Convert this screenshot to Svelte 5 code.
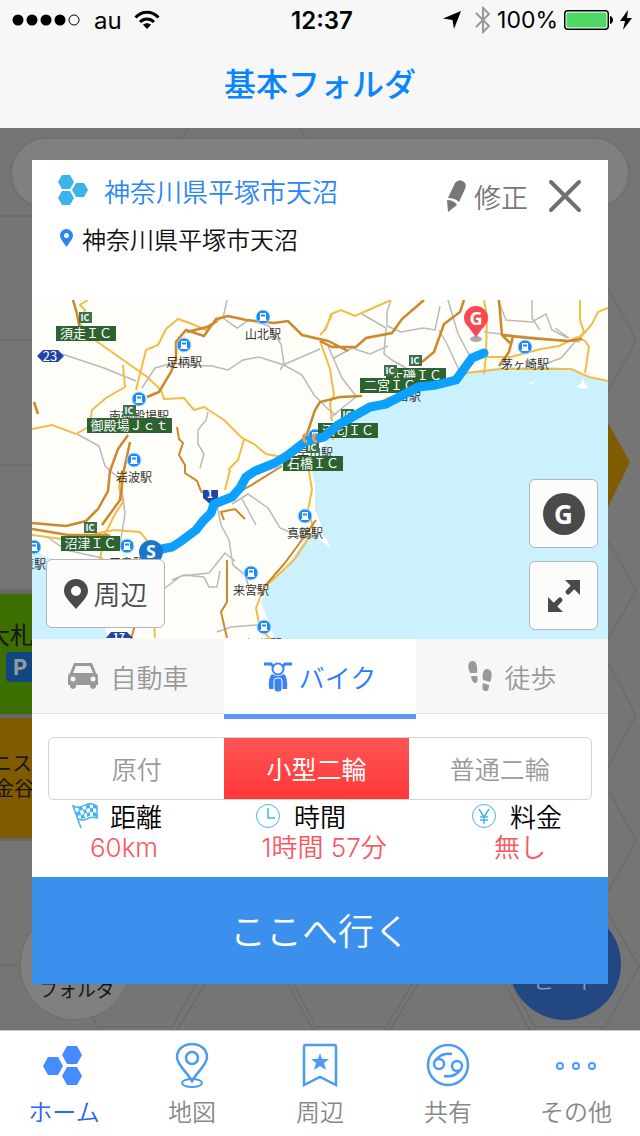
<script lang="ts">
  interface Station {
    name: string;
    x: number;
    y: number;
  }

  interface Interchange {
    name: string;
    x: number; // left edge of the plate
    y: number;
    width: number;
    icX: number;
    icY: number;
  }

  const place = "神奈川県平塚市天沼";

  const stations: Station[] = [
    { name: "山北駅", x: 231, y: 17 },
    { name: "足柄駅", x: 152, y: 45 },
    { name: "南御殿場駅", x: 107, y: 99 },
    { name: "岩波駅", x: 102, y: 160 },
    { name: "茅ヶ崎駅", x: 493, y: 47 },
    { name: "真鶴駅", x: 273, y: 216 },
    { name: "来宮駅", x: 219, y: 273 },
    { name: "三島駅", x: 95, y: 246 },
    { name: "網代駅", x: 232, y: 327 },
    { name: "原駅", x: 2, y: 247 },
    { name: "早川駅", x: 283, y: 136 },
  ];

  const interchanges: Interchange[] = [
    { name: "須走ＩＣ", x: 24, y: 26, width: 60, icX: 47, icY: 12 },
    { name: "御殿場Ｊｃｔ", x: 55, y: 118, width: 85, icX: 91, icY: 105 },
    { name: "沼津ＩＣ", x: 29, y: 236, width: 59, icX: 52, icY: 222 },
    { name: "大磯ＩＣ", x: 354, y: 68, width: 60, icX: 377, icY: 55 },
    { name: "二宮ＩＣ", x: 328, y: 78, width: 60, icX: 352, icY: 65 },
    { name: "酒匂ＩＣ", x: 286, y: 123, width: 60, icX: 309, icY: 109 },
    { name: "石橋ＩＣ", x: 251, y: 156, width: 60, icX: 274, icY: 142 },
  ];

  const vehicles = [
    { id: "car", label: "自動車" },
    { id: "bike", label: "バイク" },
    { id: "walk", label: "徒歩" },
  ];
  const classes = ["原付", "小型二輪", "普通二輪"];
  const stats = [
    { icon: "flag", label: "距離", value: "60km" },
    { icon: "clock", label: "時間", value: "1時間 57分" },
    { icon: "yen", label: "料金", value: "無し" },
  ];
  const tabs = [
    { id: "home", label: "ホーム" },
    { id: "map", label: "地図" },
    { id: "around", label: "周辺" },
    { id: "share", label: "共有" },
    { id: "more", label: "その他" },
  ];

  let vehicle = $state("bike");
  let bikeClass = $state("小型二輪");
  let activeTab = $state("home");
</script>

<div class="screen">
  <header>
    <div class="status">
      <div class="carrier">
        <svg width="68" height="12" viewBox="0 0 68 12">
          <circle cx="6" cy="6" r="5.5" />
          <circle cx="20" cy="6" r="5.5" />
          <circle cx="34" cy="6" r="5.5" />
          <circle cx="48" cy="6" r="5.5" />
          <circle cx="62" cy="6" r="5" fill="none" stroke="#000" />
        </svg>
        <span class="name">au</span>
        <svg width="26" height="20" viewBox="0 0 26 20" fill="none" stroke="#000" stroke-width="3">
          <path d="M1.5 7.5C8 .5 18 .5 24.500 7.500M6 12c4-4 10-4 14 0" />
          <path d="M13 19l-4-4.200c2.200-2 5.800-2 8 0z" fill="#000" stroke="none" />
        </svg>
      </div>
      <time>12:37</time>
      <div class="power">
        <svg width="18" height="18" viewBox="0 0 18 18"><path d="M18 0L11 18 9.500 9 0 7.500z" /></svg>
        <svg width="16" height="28" viewBox="0 0 16 28" fill="none" stroke="#999" stroke-width="2">
          <path d="M1 7l13 13-6 6V2l6 6L1 21" />
        </svg>
        <span>100%</span>
        <svg width="50" height="20" viewBox="0 0 50 20">
          <rect x=".75" y=".75" width="43.500" height="18.500" rx="3" fill="#fff" stroke="#000" stroke-width="1.500" />
          <rect x="2.500" y="2.500" width="40" height="15" rx="1.500" fill="#4cd964" />
          <path d="M46 6c4 1 4 7 0 8z" />
        </svg>
        <svg width="12" height="20" viewBox="0 0 12 20"><path d="M8 0L0 11h5L3 20 12 8H7z" /></svg>
      </div>
    </div>
    <h1>基本フォルダ</h1>
  </header>

  <main>
    <!-- dimmed honeycomb behind the dialog -->
    <svg class="backdrop" viewBox="0 0 640 902" preserveAspectRatio="xMidYMin slice" aria-hidden="true">
      <rect width="640" height="902" fill="#757575" />
      <g fill="none" stroke="#6b6b6b" stroke-width="1.500">
        <path d="M188 0l-6 10M300 0l5 10M0 88h32M0 212h32M0 337h32M0 462h32M0 837h32" />
        <path d="M608 160l28 52-28 52M608 412l28 50-28 50M608 535l28 52-28 52M608 662l28 51-28 51M608 785l32 55" />
        <path d="M196 856l-24 43H98l-16-28M205 856l-28 46M288 856l25 46M294 856l22 43h70l26-43M418 856l-28 46M505 856l25 46M511 856l24 43h70l34-60" />
      </g>
      <rect x="11" y="10" width="618" height="70" rx="35" fill="#808080" stroke="#707070" stroke-width="2" />
      <path d="M608 295l22 39-22 45z" fill="#805b00" />
      <rect y="462" width="40" height="4" fill="#686868" />
      <rect y="466" width="40" height="120" fill="#3d6e00" />
      <rect y="586" width="40" height="4" fill="#66666d" />
      <rect y="590" width="40" height="120" fill="#805b00" />
      <rect y="710" width="40" height="3" fill="#66666d" />
      <g class="bg-text">
        <text x="-14" y="516" font-size="24">大札</text>
        <text x="-8" y="643" font-size="20">ニス</text>
        <text x="-6" y="668" font-size="20">金谷</text>
      </g>
      <rect x="6" y="524" width="34" height="30" rx="4" fill="#104783" />
      <text x="13" y="547" font-size="22" font-weight="700" fill="#999" font-family="Inter, sans-serif">P</text>
      <circle cx="75" cy="837" r="55" fill="#808080" stroke="#6c6c6c" />
      <text class="bg-text" x="77" y="869" font-size="19" text-anchor="middle">フォルダ</text>
      <circle cx="565" cy="836" r="56" fill="#234781" />
      <text x="565" y="861" font-size="22" text-anchor="middle" fill="#8c9aaf" font-family="Noto Sans CJK JP, sans-serif">ヒート</text>
    </svg>

    <section class="dialog">
      <div class="heading">
        <div class="titles">
          <h2>
            <svg width="30" height="30" viewBox="0 0 30 30" fill="#3cb4eb">
              <path d="M4 0h8l4 7-4 7H4L0 7zM4 16h8l4 7-4 7H4l-4-7zM18 8h8l4 7-4 7h-8l-4-7z" />
            </svg>
            {place}
          </h2>
          <p>
            <svg width="13" height="18" viewBox="0 0 13 18">
              <path fill="#2a86f5" fill-rule="evenodd" d="M6.500 0C10 0 13 3 13 6.500 13 10 9 14 6.500 18 4 14 0 10 0 6.500 0 3 3 0 6.500 0zm0 4a2.500 2.500 0 1 0 0 5 2.500 2.500 0 0 0 0-5z" />
            </svg>
            {place}
          </p>
        </div>
        <button class="edit">
          <svg width="20" height="32" viewBox="0 0 20 32" fill="#777">
            <path d="M9 3q4-5 9-1 3 2 1 7l-6 13q-4-4-11-4zM1 20q7 0 10 5l-9 7z" />
          </svg>
          修正
        </button>
        <button class="close" aria-label="閉じる">
          <svg width="34" height="34" viewBox="0 0 34 34" stroke="#707070" stroke-width="4" stroke-linecap="round">
            <path d="M3 3l28 28M31 3L3 31" />
          </svg>
        </button>
      </div>

      <div class="map">
        <svg class="canvas" viewBox="0 0 576 339">
          <rect width="576" height="339" fill="#fffef8" />
          <path
            fill="#cbf1ff"
            d="M576 81l-22-4-10-7-22-3h-50l-38 5-20 8-40 12-44 20-28 20-14 18-9 20 4 14v26l6 14 2 10-17-2-4 12-14 20-19 22-8 16 6 16 8 21H576zM0 250l26 12 36 30 14 47H0z"
          />
          <path fill="#fff" d="M284 238l4-4 6 4 5 10-8-6zM544 87l4-3 3-5 2 5 4 3-6 2zM497 83l6-2-4 4z" />

          <g fill="none" stroke="#b9b9bc" stroke-width="1.500">
            <path d="M30 54l42 14 32 13M110 88l13-20 18-5 14 2 25 1 16 4 15-10 16-3 25 8 18 10 12 20 14 14 8 6M195 0l-4 18 14 10 12-8 20 6 12 18 3 20-4 6M251 65l37-16" />
            <path d="M45 134l22 12 6 20 16 14 4 34-5 30M176 112l-2 8-8 10v14l6 10-4 14M14 236l20 14 36 8 6 14" />
            <path d="M185 205l4 20 8 15 4 25 12 10 4 12 16 3M200 204l16-10 20 14 12 20 24 10M210 199l14 26M133 288l16-12 28-3 16-20 10 8M140 280l12-5 20 2 5 10h8l3-16M185 332l14-5 26-2" />
            <path d="M330 14l24 14-2 26 8 6 14 8M302 58l18-10 18 6 18-8M359 0l-4 12v14l14 6 22-4 12 2 5-24M407 30l8 14 12 26M416 0l10 34 13 24M452 32l36 4 60 6M466 0l8 20 26 2 14-8 6 16 16 8M481 40l-10 25M543 42l-14 16-16 6M523 28l14 10M324 96l-14-18-14-32M298 118l26-21M500 0v18l8 12" />
          </g>
          <g fill="none" stroke="#f0bd48" stroke-width="2">
            <path d="M0 129l20-4 24 9 14-8 2-16 14-12 19-11-2-22M56 0l-8 5 5 5-5 14 12 14 34 24 20 14 15 14 3 9 20-1 10 12 10-3 20 13 18 18 12 6 12 10 22 4M104 90l10-40 12-5 8-16 12-10 14 5 14 6 16-13M212 140l-6 20-10 10M90 170l-3 18 4 14-8 12-10 20-6 30M62 234l20-4 26 2 8 10 3 20 2 40 2 36" />
            <path d="M276 165l4 25-4 20 6 20-20 30-30 28-8 20 4 20 12 13M198 170l-5 20M288 35l6-6 5-15 10-4 14 6 18-8 18-8M288 41l10 28 4 26-4 8 2 18M300 15l-8 16M452 0l3 16-1 40-2 18M455 57l24 0 30-8 18-3 18-9 8 4 4 6-4 26M548 0v20l4 12-6 7M548 38l12-14 6-12 10-4M0 235l30 4" />
            <path d="M300 140l16-20 40-22 46-12 20-8 12-5 35-4h70l18 8 19 4" />
          </g>
          <g fill="none" stroke="#cd882c" stroke-width="2.500">
            <path d="M41 0l4 14 3 16M115 97l12-5 12-20 5-12v-18l10-12 18 6 12-17 12-3 18 4 28 3 14-2 14 14 26 6 20 10M155 32l20-5 10-6M288 41l12 6h24l10-9 26-5 10-14 22-19M273 140l10-30 5-8 20-5 22-1M390 62l12-10 10-28 16-12 4-12M467 0l3 35 26 3 40 3 14-2M467 66l10-14 4-16M470 35l8 8" />
            <path d="M96 135l-10 14-8 22-2 20-10 18-12 12-20 5-34-3M98 142l-6 28-4 30-18 25M0 229l36 6 40 0 9 8M2 102l4 12" />
            <path stroke-width="2" d="M145 127l2 12 4 4-4 12 6 10v8l12 8 4 10 8 6 10 4M192 220l-3-8 14-3 10 10M190 205l2-5 26-14 32-20M195 260v42l-6 10 6 26M284 220l-20 28-12 16-19 22M103 325l-4 14" />
          </g>

          {#each stations as s}
            <circle cx={s.x} cy={s.y} r="7" fill="#1a8af5" stroke="#b4dbfb" />
            <path
              transform="translate({s.x - 4} {s.y - 4})"
              fill="#fff"
              fill-rule="evenodd"
              d="M1 0h6v6H1zM2 1.500v2h4v-2zM0 8l1-2h6l1 2z"
            />
            <text x={s.x} y={s.y + 22} text-anchor="middle">{s.name}</text>
          {/each}
          <text x="371" y="101" text-anchor="middle">二宮駅</text>

          <g fill="#2444a4">
            <path d="M5 56l6-6h15l6 6-6 6H11zM171 190h15v8l-8 6-7-6z" />
            <path d="M74 338l5-6h16l6 6z" />
          </g>
          <text class="plate" x="18" y="61" text-anchor="middle">23</text>
          <text class="plate small" x="178" y="198" text-anchor="middle">1</text>
          <text class="plate small" x="87" y="341" text-anchor="middle">17</text>

          {#each interchanges as ic}
            <rect x={ic.icX} y={ic.icY} width="13" height="11" fill="#3a704c" />
            <text class="plate ic" x={ic.icX + 6} y={ic.icY + 9} text-anchor="middle">IC</text>
            <rect x={ic.x} y={ic.y} width={ic.width} height="15" fill="#2c6330" />
            <text class="plate" x={ic.x + ic.width / 2} y={ic.y + 12} text-anchor="middle">{ic.name}</text>
          {/each}

          <path
            fill="none"
            stroke="#0ca0ff"
            stroke-width="9"
            stroke-linecap="round"
            stroke-linejoin="round"
            d="M124 250l16-3 8-5 8-6 8-6 7-9 8-8 3-9 18-7 8-9 6-11 9-6 20-8 13-8 18-14 18-4 14-12 16-9 16-9 16-3 32-17 18-2 20-5 8-11 8-11 12-5"
          />
          <path fill="none" stroke="#f19a45" stroke-width="3" d="M274 134c-4 2-3 7 1 8M284 134c-4 2-3 7 1 8" />
          <circle cx="119" cy="252" r="12" fill="#1976cd" />
          <text class="start" x="119" y="258" text-anchor="middle">S</text>
          <ellipse cx="444" cy="39" rx="6" ry="3" fill="#aaa" />
          <path fill="#f94a53" d="M444 6c7 0 12 6 12 12 0 7-7 10-12 20-5-10-12-13-12-20 0-6 5-12 12-12z" />
          <text class="goal" x="444" y="25" text-anchor="middle">G</text>
        </svg>

        <button class="around">
          <svg width="24" height="30" viewBox="0 0 24 30">
            <path fill="#4a4a4a" fill-rule="evenodd" d="M12 0c7 0 12 5 12 12 0 6-7 12-12 18C7 24 0 18 0 12 0 5 5 0 12 0zm0 7a5 5 0 1 0 0 10 5 5 0 0 0 0-10z" />
          </svg>
          周辺
        </button>
        <div class="controls">
          <button aria-label="目的地"><span class="goal-mark">G</span></button>
          <button aria-label="拡大">
            <svg width="32" height="32" viewBox="0 0 32 32" fill="#4a4a4a">
              <path d="M17 0h15v15zM0 17v15h15z" />
              <path d="M26 6l-6 6M6 26l6-6" stroke="#4a4a4a" stroke-width="5" stroke-linecap="round" />
            </svg>
          </button>
        </div>
      </div>

      <div class="vehicles" role="tablist">
        {#each vehicles as v}
          <button role="tab" aria-selected={vehicle === v.id} class:active={vehicle === v.id} onclick={() => (vehicle = v.id)}>
            {#if v.id === "car"}
              <svg width="32" height="28" viewBox="0 0 32 28">
                <path fill="#999" fill-rule="evenodd" d="M7 1h18l4 10q2 1 2 4v8h-2v2q-3 4-6 0v-2H9v2q-3 4-6 0v-2H1v-8q0-3 2-4zm2 3L6 11h20l-3-7zM6 14.500a2.500 2.500 0 1 0 0 5 2.500 2.500 0 0 0 0-5zm20 0a2.500 2.500 0 1 0 0 5 2.500 2.500 0 0 0 0-5z" />
              </svg>
            {:else if v.id === "bike"}
              <svg width="28" height="32" viewBox="0 0 28 32" fill="#3b83f5">
                <path d="M8 13q6 4 12 0 4 3 3 15H5Q4 16 8 13z" />
                <rect x="10" y="17" width="8" height="14" rx="3" stroke="#fff" />
                <path d="M0 3h7l4 4M28 3h-7l-4 4" fill="none" stroke="#3b83f5" stroke-width="3" />
                <circle cx="14" cy="8" r="5.500" fill="#fff" stroke="#3b83f5" stroke-width="2" />
              </svg>
            {:else}
              <svg width="26" height="32" viewBox="0 0 26 32" fill="#999">
                <path d="M5 1c4-1 6 5 5 12H3C1 8 0 2 5 1zM4 16h6q2 7-2 7-3 0-4-7zM20 9c5 0 6 6 3 13l-7-2c-1-5 0-11 4-11zM16 23l6 2q0 7-4 6-4-1-2-8z" />
              </svg>
            {/if}
            {v.label}
          </button>
        {/each}
      </div>

      <div class="classes">
        {#each classes as c}
          <button class:active={bikeClass === c} aria-pressed={bikeClass === c} onclick={() => (bikeClass = c)}>{c}</button>
        {/each}
      </div>

      <dl class="stats">
        {#each stats as s}
          <div>
            <dt>
              <svg width="26" height="26" viewBox="0 0 26 26" fill="none" stroke="#46b4ee" stroke-width="1.500">
                {#if s.icon === "flag"}
                  <path d="M1 3l8 22M1 3q6 3 12-1 6-3 12 1v12q-6-2-10 1-5 2-9 0z" />
                  <path fill="#46b4ee" stroke="none" d="M6 4l4-1 1 4-4 1zM14 2l4-1v4l-4 1zM21 1l4 2v3l-4-1zM11 7l3-1 1 4-3 1zM18 5l3 0v4l-3 0zM4 9l4-1 1 4-4 1zM15 10l3-1v4l-3 1zM21 9l4 1v4l-4-1zM9 12l3-1 1 4-4 1z" />
                {:else if s.icon === "clock"}
                  <circle cx="12" cy="13" r="11.500" stroke-width="1" />
                  <path d="M12 5v10h7" />
                {:else}
                  <circle cx="12" cy="13" r="11.500" stroke-width="1" />
                  <path d="M7 6l5 8 5-8M12 14v7M8 14h8M8 17h8" />
                {/if}
              </svg>
              {s.label}
            </dt>
            <dd>{s.value}</dd>
          </div>
        {/each}
      </dl>

      <button class="go">ここへ行く</button>
    </section>
  </main>

  <nav>
    {#each tabs as t}
      <a href="#{t.id}" class:active={activeTab === t.id} onclick={() => (activeTab = t.id)}>
        <svg width="44" height="46" viewBox="0 0 44 46" fill="none" stroke="#4b9bf2" stroke-width="2.500">
          {#if t.id === "home"}
            <path fill="#448cff" stroke="none" d="M25 3h10l5 9-5 9H25l-5-9zM6 14h10l5 9-5 9H6l-5-9zM25 24h10l5 9-5 9H25l-5-9z" />
          {:else if t.id === "map"}
            <path d="M22 38C17 29 7 22 7 14 7 6 14 1 22 1s15 5 15 13c0 8-10 15-15 24z" />
            <ellipse cx="22" cy="40" rx="10" ry="4" stroke-width="2" />
            <circle cx="22" cy="15" r="6" />
          {:else if t.id === "around"}
            <path d="M6 42V4q0-2 2-2h28q2 0 2 2v38l-16-8z" />
            <path fill="#4b9bf2" stroke="none" d="M22 10l2 6h7l-5 4 2 7-6-4-6 4 2-7-5-4h7z" />
          {:else if t.id === "share"}
            <circle cx="22" cy="22" r="20" />
            <circle cx="13" cy="21" r="5" />
            <circle cx="31" cy="23" r="5" />
            <path d="M9 18q6-9 17-7M35 26q-6 9-17 7" />
          {:else}
            <circle cx="6" cy="23" r="3" stroke-width="2" />
            <circle cx="22" cy="23" r="3" stroke-width="2" />
            <circle cx="38" cy="23" r="3" stroke-width="2" />
          {/if}
        </svg>
        {t.label}
      </a>
    {/each}
  </nav>
</div>

<style>
  :global(body) {
    background: #fff;
  }

  .screen {
    font-family: "Noto Sans CJK JP", sans-serif;
    font-weight: 350;
    color: #111;
  }

  h1,
  h2,
  p,
  dl,
  dd {
    margin: 0;
  }

  svg {
    flex: none;
  }

  button {
    font: inherit;
    color: inherit;
    padding: 0;
    border: 0;
    background: none;
    display: flex;
    align-items: center;
    justify-content: center;
    white-space: nowrap;
  }

  header {
    background: #f7f7f7;
    height: 128px;
  }

  .status {
    display: grid;
    grid-template-columns: 1fr auto 1fr;
    align-items: center;
    height: 40px;
    padding: 0 8px 0 12px;
    font-family: Inter, sans-serif;
    font-size: 24px;
    font-weight: 400;
    color: #000;
  }

  .status time {
    font-weight: 600;
  }

  .carrier,
  .power {
    display: flex;
    align-items: center;
  }

  .carrier .name {
    margin: 0 12px 0 14px;
  }

  .power {
    justify-content: flex-end;
    gap: 6px;
    font-size: 23px;
  }

  .power svg:first-child {
    margin-right: 8px;
  }

  h1 {
    line-height: 84px;
    font-size: 32px;
    font-weight: 500;
    text-align: center;
    color: #0a84ff;
  }

  main {
    position: relative;
    padding: 32px 32px 46px;
    background: #757575;
  }

  /* fills the area under the dialog */
  .backdrop {
    position: absolute;
    inset: 0;
    width: 100%;
    height: 100%;
  }

  .bg-text {
    fill: #151515;
    font-weight: 400;
  }

  .dialog {
    position: relative;
    background: #fff;
  }

  .heading {
    display: flex;
    align-items: flex-start;
    height: 140px;
    padding: 0 26px;
    box-sizing: border-box;
  }

  .titles {
    flex: 1;
  }

  h2,
  .titles p {
    display: flex;
    align-items: center;
    white-space: nowrap;
  }

  h2 {
    gap: 16px;
    height: 60px;
    font-size: 26px;
    font-weight: 350;
    color: #2a86f5;
  }

  .titles p {
    gap: 9px;
    height: 36px;
    padding-left: 2px;
    font-size: 24px;
  }

  .edit {
    gap: 8px;
    height: 72px;
    font-size: 27px;
    color: #777;
  }

  .close {
    height: 72px;
    margin-left: 20px;
  }

  .map {
    position: relative;
    background: #cbf1ff;
  }

  .canvas {
    display: block;
    width: 100%;
    font-size: 12px;
    font-weight: 400;
    fill: #333;
  }

  .plate {
    fill: #fff;
    font-size: 13px;
  }

  .plate.small {
    font-size: 10px;
    font-weight: 700;
  }

  .plate.ic {
    font-size: 9px;
    font-weight: 700;
  }

  .start,
  .goal {
    fill: #fff;
    font-family: "Open Sans", sans-serif;
    font-size: 18px;
    font-weight: 700;
  }

  .map button {
    height: 69px;
    box-sizing: border-box;
    border: 1px solid #b4b4bc;
    border-radius: 6px;
    background: #fcfcfc;
  }

  .map .around {
    position: absolute;
    left: 14px;
    bottom: 11px;
    width: 119px;
    gap: 6px;
    font-size: 27px;
    color: #4a4a4a;
  }

  .controls {
    position: absolute;
    right: 10px;
    bottom: 9px;
    display: grid;
    gap: 13px;
  }

  .map .controls button {
    width: 69px;
  }

  .goal-mark {
    width: 42px;
    border-radius: 50%;
    background: #4a4a4a;
    color: #fff;
    font: 700 26px/42px "Open Sans", sans-serif;
  }

  .vehicles {
    display: grid;
    grid-template: 74px / repeat(3, 1fr);
    height: 75px;
    background: #f7f7f7;
    border-bottom: 1px solid #e4e4e6;
    box-sizing: border-box;
  }

  .vehicles button {
    gap: 11px;
    font-size: 26px;
    color: #999;
  }

  .vehicles .active {
    background: #fff;
    color: #2a7cf6;
    height: 80px;
    border-bottom: 5px solid #5b97f8;
    gap: 7px;
  }

  .classes {
    display: grid;
    grid-template-columns: 176fr 185fr 183fr;
    margin: 23px 16px 0;
    border: 1px solid #d4d4d8;
    border-radius: 6px;
    overflow: hidden;
  }

  .classes button {
    height: 61px;
    padding-bottom: 2px;
    font-size: 25px;
    color: #999;
  }

  .classes .active {
    background: linear-gradient(#ff5555, #ff3737);
    color: #fff;
    font-weight: 400;
  }

  .stats {
    display: grid;
    grid-template-columns: 23fr 27fr 22fr;
    height: 77px;
    line-height: 32px;
  }

  .stats dt {
    display: flex;
    align-items: center;
    gap: 12px;
    padding-left: 40px;
    font-size: 26px;
    color: #000;
  }

  .stats dd {
    text-align: center;
    font-family: Inter, "Noto Sans CJK JP", sans-serif;
    font-size: 26px;
    color: #f55a64;
  }

  .go {
    width: 100%;
    height: 107px;
    padding-bottom: 4px;
    background: #3a90ec;
    color: #fff;
    font-size: 36px;
  }

  nav {
    display: grid;
    grid-template-columns: repeat(5, 1fr);
    height: 106px;
    box-sizing: border-box;
    border-top: 1px solid #c8c8c8;
  }

  nav a {
    display: flex;
    flex-direction: column;
    align-items: center;
    padding-top: 12px;
    gap: 3px;
    font-size: 24px;
    line-height: 38px;
    text-decoration: none;
    color: #888;
  }

  nav .active {
    color: #2a66f5;
  }
</style>
